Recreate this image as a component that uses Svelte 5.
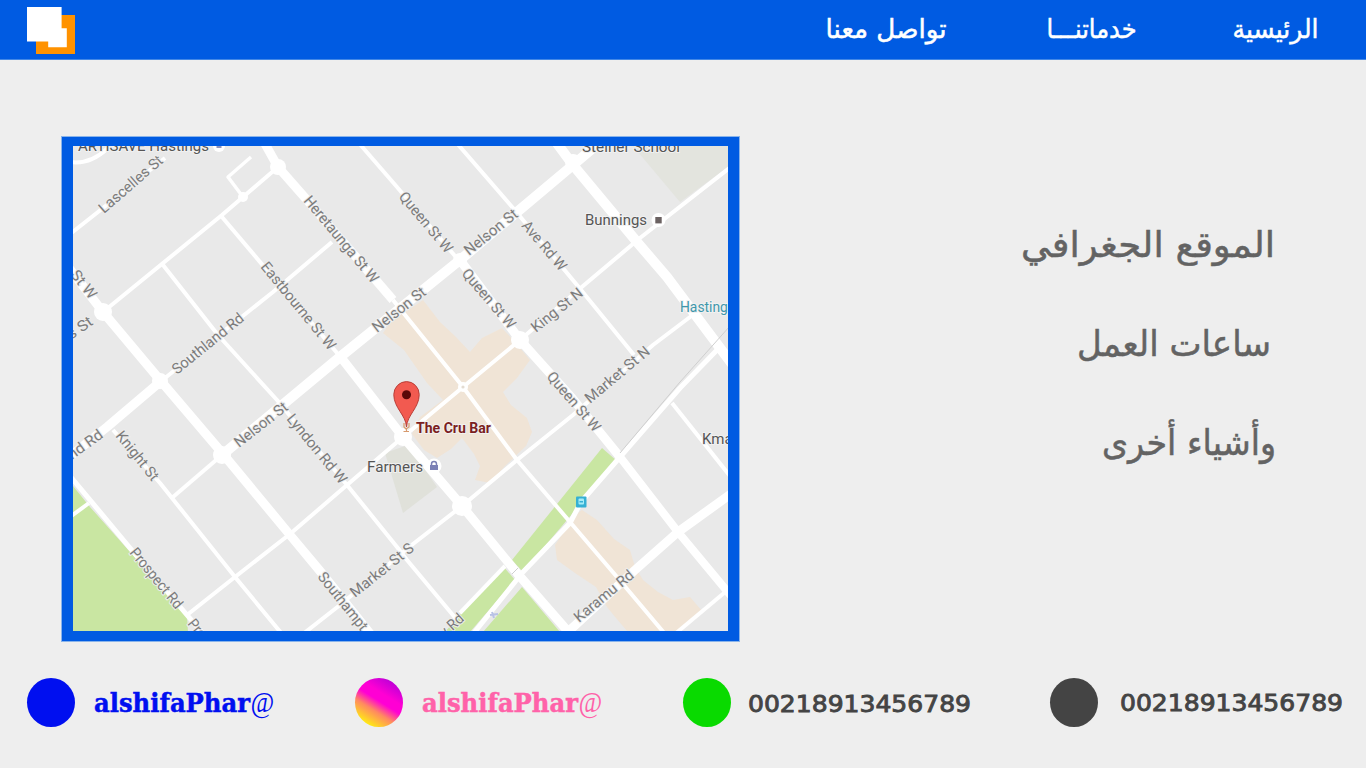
<script>
  const nav = [
    { text: 'الرئيسية', w: 86, gap: 0 },
    { text: 'خدماتنـــا', w: 90, gap: 96 },
    { text: 'تواصل معنا', w: 121, gap: 100 }
  ];

  const info = [
    { text: 'الموقع الجغرافي', w: 254, right: 91 },
    { text: 'ساعات العمل', w: 194, right: 95 },
    { text: 'وأشياء أخرى', w: 174, right: 90 }
  ];

  // [width, points]
  const roads = [
    [4, '60,242 98,212 165,158'],
    [4, '103,312 222,215 243,197 278,167'],
    [3.5, '243,197 228,177 251,157'],
    [4, '222,217 343,360'],
    [4, '160,382 273,292 332,242'],
    [4, '163,265 218,335 277,400 347,485 397,547 407,560 457,620'],
    [4, '222,455 173,497'],
    [4, '113,430 160,483 235,577 282,634'],
    [4, '187,615 235,577 290,534 347,485 403,437'],
    [4, '303,634 340,605 413,544 462,506 517,460 573,415 653,345 694,314'],
    [5, '70,476 130,548 187,615 205,636'],
    [4, '70,517 89,503'],
    [4, '358,142 397,187 460,262'],
    [4, '455,141 513,208 577,285 634,355'],
    [4, '732,166 640,238 583,286 520,340 463,387 403,437'],
    [4, '393,300 463,387 517,460 570,522 617,577 665,634'],
    [5, '717,350 680,388 620,457 581,502 570,523 523,572 473,634'],
    [4, '505,566 460,613'],
    [4, '672,403 730,476'],
    [4, '675,634 724,593'],
    [10, '612,132 573,165 460,260 340,357 222,455'],
    [9, '264,142 278,167 307,200 393,300'],
    [9, '343,360 403,437 462,506 517,573 572,636'],
    [9, '66,264 103,312 160,380 223,454 290,535 320,571 372,636'],
    [9, '160,382 107,427 68,458'],
    [9, '460,260 520,340 572,398 620,457'],
    [8, '620,457 678,532 732,597'],
    [10, '556,142 573,165 637,242 667,277 732,364'],
    [9, '735,491 678,532 635,570 570,630']
  ];

  const junctions = [
    [278, 167, 8], [103, 312, 9], [160, 381, 8], [222, 455, 9], [403, 437, 9],
    [462, 506, 10], [520, 340, 9], [460, 260, 7], [243, 197, 5], [463, 387, 5], [573, 162, 8]
  ];

  // [text, start x, start y, end x, end y]
  const streets = [
    ['Lascelles St', 104, 214, 164, 162],
    ['St W', 70, 275, 90, 300],
    ['s St', 71, 340, 94, 324],
    ['Southland Rd', 177, 375, 245, 320],
    ['Heretaunga St W', 303, 201, 372, 284],
    ['Eastbourne St W', 260, 267, 329, 351],
    ['Nelson St', 377, 333, 427, 294],
    ['Nelson St', 469, 256, 519, 216],
    ['Queen St W', 398, 197, 446, 254],
    ['Queen St W', 461, 274, 509, 330],
    ['Ave Rd W', 521, 226, 560, 272],
    ['King St N', 536, 333, 584, 295],
    ['Market St N', 590, 404, 651, 353],
    ['Queen St W', 546, 377, 594, 433],
    ['Nelson St', 239, 448, 289, 409],
    ['Lyndon Rd W', 286, 419, 340, 485],
    ['Knight St', 115, 436, 152, 482],
    ['nd Rd', 72, 460, 104, 437],
    ['Prospect Rd', 129, 553, 176, 610],
    ['Pros', 187, 624, 204, 645],
    ['Southampt', 317, 577, 361, 632],
    ['Market St S', 355, 598, 415, 550],
    ['y Rd', 445, 638, 465, 620],
    ['Karamu Rd', 579, 623, 635, 577]
  ].map(([text, x1, y1, x2, y2]) => ({
    text, x1, y1,
    angle: (Math.atan2(y2 - y1, x2 - x1) * 180) / Math.PI,
    len: Math.hypot(x2 - x1, y2 - y1)
  }));
</script>

<div class="page">
  <header>
    <svg class="logo" width="48" height="47" viewBox="0 0 48 47">
      <path fill="#ff9200" d="M9 8H48V47H9z" />
      <path fill="#fff" d="M0 0H34.6V21.3H39.8V40.3H21.2V34.5H0z" />
    </svg>
    <nav>
      {#each nav as n}
        <svg class="nav-item" width={n.w} height="59" style="margin-right:{n.gap}px">
          <text x="0.5" y="38" textLength={n.w} lengthAdjust="spacingAndGlyphs">{n.text}</text>
        </svg>
      {/each}
    </nav>
  </header>

  <main>
    <div class="map">
      <svg width="655" height="485" viewBox="73 146 655 485">
        <rect x="73" y="146" width="655" height="486" fill="#e9e9e9" />
        <path fill="#e3e4de" d="M633 146L680 202L728 167V146z" />
        <path fill="#e0e1da" d="M385 453L403 513L437 487L408 445z" />
        <path fill="#f0e4d6" d="M410 309L423 300L440 322L456 337L470 352L482 338L502 328L515 342L530 360L517 378L503 392L511 405L527 418L532 432L526 446L505 466L490 483L475 480L480 466L474 454L462 438L451 449L437 458L424 450L412 434L420 417L443 400L427 383L404 350L383 333L392 320z" />
        <path fill="#f0e4d6" d="M582 510L597 520L614 539L630 550L635 567L643 580L658 592L673 600L690 597L702 611L677 632H628L616 618L607 607L596 587L575 573L557 560L555 545L563 533L571 518z" />
        <g fill="#c9e6a2">
          <path d="M73 486L90 507L187 616L188 632H73z" />
          <path d="M602 448L617 461L523 572L512 560z" />
          <path d="M503 566L515 580L470 632H445z" />
          <path d="M522 587L560 632H483z" />
        </g>
        <g fill="none" stroke="#fff" stroke-linejoin="round">
          <path stroke-width="4" d="M70 162Q90 165 108 148" />
          {#each roads as [w, pts]}
            <polyline points={pts} stroke-width={w} />
          {/each}
        </g>
        {#each junctions as [x, y, r]}
          <circle cx={x} cy={y} {r} fill="#fff" />
        {/each}
        <circle cx="463" cy="387" r="1.6" fill="#e3dcd2" />
        <path fill="none" stroke="#cfcfcf" d="M730 326L680 382L620 453M512 574L518 568" />

        <g class="street">
          {#each streets as s}
            <text transform="translate({s.x1} {s.y1}) rotate({s.angle})" textLength={s.len} lengthAdjust="spacingAndGlyphs">{s.text}</text>
          {/each}
        </g>

        <g class="place">
          <circle cx="219" cy="146" r="6" fill="#fff" />
          <rect x="216.500" y="144" width="5" height="4" fill="#8d93bb" />
          <text x="78" y="151" textLength="131" lengthAdjust="spacingAndGlyphs">ARTISAVE Hastings</text>
          <text x="582" y="152" textLength="98" lengthAdjust="spacingAndGlyphs">Steiner School</text>
          <text x="585" y="225" textLength="62" lengthAdjust="spacingAndGlyphs">Bunnings</text>
          <text x="367" y="471.500" textLength="56" lengthAdjust="spacingAndGlyphs">Farmers</text>
          <text x="702" y="444">Kmart</text>
          <text class="teal" x="680" y="312" textLength="55" lengthAdjust="spacingAndGlyphs">Hastings</text>
          <text class="bar" x="416" y="433" textLength="75" lengthAdjust="spacingAndGlyphs">The Cru Bar</text>
        </g>

        <circle cx="658.500" cy="220" r="7" fill="#fff" />
        <rect x="655.300" y="217" width="6.400" height="6.400" fill="#6b6262" />
        <circle cx="434" cy="466" r="7.500" fill="#fff" />
        <path fill="#7b80b5" d="M430 465H438V470H430z" />
        <path fill="none" stroke="#7b80b5" stroke-width="1.500" d="M431.500 465V464A2.500 2.500 0 0 1 436.500 464V465" />
        <rect x="576" y="496.500" width="10.500" height="11" rx="1" fill="#35b0d4" />
        <rect x="578.500" y="498.500" width="5.500" height="6" rx="1" fill="#a5ecf7" />
        <path fill="#35b0d4" d="M579.500 501H583V502.500H579.500z" />
        <path fill="none" stroke="#b9c2e6" stroke-width="2" d="M490 615L498 614M492 612L494 618" />

        <path fill="none" stroke="#d79a6d" stroke-width="1.200" d="M404 423V427L406 429L409 427V423M406.500 429V431M403.500 431.500H409" />
        <path fill="#f25a50" stroke="#b93e37" d="M406.500 427C406 415 393.800 408 393.800 394.500A12.700 12.900 0 0 1 419.200 394.500C419.200 408 407 415 406.500 427z" />
        <circle cx="406.500" cy="394.800" r="4.500" fill="#590808" />
      </svg>
    </div>

    <section class="info">
      {#each info as i}
        <svg width={i.w} height="99" style="margin-right:{i.right}px">
          <text x="0" y="57" textLength={i.w} lengthAdjust="spacingAndGlyphs">{i.text}</text>
        </svg>
      {/each}
    </section>
  </main>

  <footer>
    <span class="dot blue"></span>
    <svg class="handle blue-text" width="181" height="40">
      <text x="0" y="24" textLength="156" lengthAdjust="spacingAndGlyphs">alshifaPhar</text>
      <text class="at" x="156.500" y="24" textLength="23.500" lengthAdjust="spacingAndGlyphs">@</text>
    </svg>
    <span class="dot insta"></span>
    <svg class="handle pink-text" width="181" height="40">
      <text x="0" y="24" textLength="156" lengthAdjust="spacingAndGlyphs">alshifaPhar</text>
      <text class="at" x="156.500" y="24" textLength="23.500" lengthAdjust="spacingAndGlyphs">@</text>
    </svg>
    <span class="dot green"></span>
    <svg class="phone" width="224" height="40">
      <text x="0" y="24" textLength="223" lengthAdjust="spacingAndGlyphs">00218913456789</text>
    </svg>
    <span class="dot dark"></span>
    <svg class="phone last" width="224" height="40">
      <text x="0" y="23" textLength="223" lengthAdjust="spacingAndGlyphs">00218913456789</text>
    </svg>
  </footer>
</div>

<style>
  :global(body) {
    margin: 0;
    background: #eeeeee;
  }
  .page {
    width: 1366px;
    height: 768px;
    overflow: hidden;
    background: #eeeeee;
    display: flex;
    flex-direction: column;
  }
  svg {
    display: block;
    flex: none;
    overflow: visible;
  }
  header {
    height: 59px;
    flex: none;
    background: #005be2;
    border-bottom: 1px solid #4388e6;
    background-clip: padding-box;
    display: flex;
    justify-content: space-between;
    padding: 0 48px 0 27px;
  }
  .logo {
    margin-top: 7px;
  }
  nav {
    display: flex;
    flex-direction: row-reverse;
  }
  .nav-item {
    fill: #fff;
    stroke: #fff;
    stroke-width: 0.5px;
    font: 26px 'DejaVu Sans', sans-serif;
  }
  main {
    flex: none;
    height: 582px;
    display: flex;
    justify-content: space-between;
    align-items: flex-start;
    padding: 77px 0 0 62px;
    box-sizing: border-box;
  }
  .map {
    border: solid #005be2;
    border-width: 9px 11px 10px 11px;
    box-shadow: 0 0 0 1px #8ab4ea;
  }
  .map svg {
    overflow: hidden;
  }
  .street {
    font: 15px Roboto, sans-serif;
    fill: #7c7c7c;
    stroke: #ededed;
    stroke-width: 2px;
    paint-order: stroke;
  }
  .place {
    font: 15px Roboto, sans-serif;
  }
  .place text {
    fill: #555;
    stroke: #f1f1f1;
    stroke-width: 2px;
    paint-order: stroke;
  }
  .place .teal {
    fill: #3f97ab;
    font-size: 14px;
  }
  .place .bar {
    fill: #7b1f22;
    font-weight: 700;
    font-size: 14.5px;
  }
  .info {
    padding-top: 62.5px;
    display: flex;
    flex-direction: column;
    align-items: flex-end;
  }
  .info svg {
    fill: #636363;
    stroke: #636363;
    stroke-width: 0.5px;
    font: 35.5px 'DejaVu Sans', sans-serif;
  }
  footer {
    display: flex;
    padding: 36px 0 0 26.8px;
  }
  .dot {
    width: 48px;
    height: 49px;
    border-radius: 50%;
    flex: none;
  }
  .blue { background: #000ff0; }
  .insta { background: linear-gradient(32deg, #ffe815 14%, #ff8a60 36%, #ff00d4 52%, #ff00d4 64%, #a800d8 95%); }
  .green { background: #09da00; }
  .dark { background: #444; }
  .handle {
    margin: 10px 80px 0 19px;
    font: bold 25.5px 'DejaVu Serif', serif;
    stroke-width: 0.5px;
  }
  .handle .at {
    font: italic 29px 'Liberation Serif', serif;
    stroke: none;
  }
  .blue-text { fill: #000ff0; stroke: #000ff0; }
  .pink-text { fill: #ff62a9; stroke: #ff62a9; }
  .phone {
    margin: 10px 78.5px 0 17px;
    font: 23.5px 'DejaVu Sans', sans-serif;
    fill: #444;
    stroke: #444;
    stroke-width: 0.9px;
  }
  .phone.last {
    margin: 10px 0 0 22px;
  }
</style>
